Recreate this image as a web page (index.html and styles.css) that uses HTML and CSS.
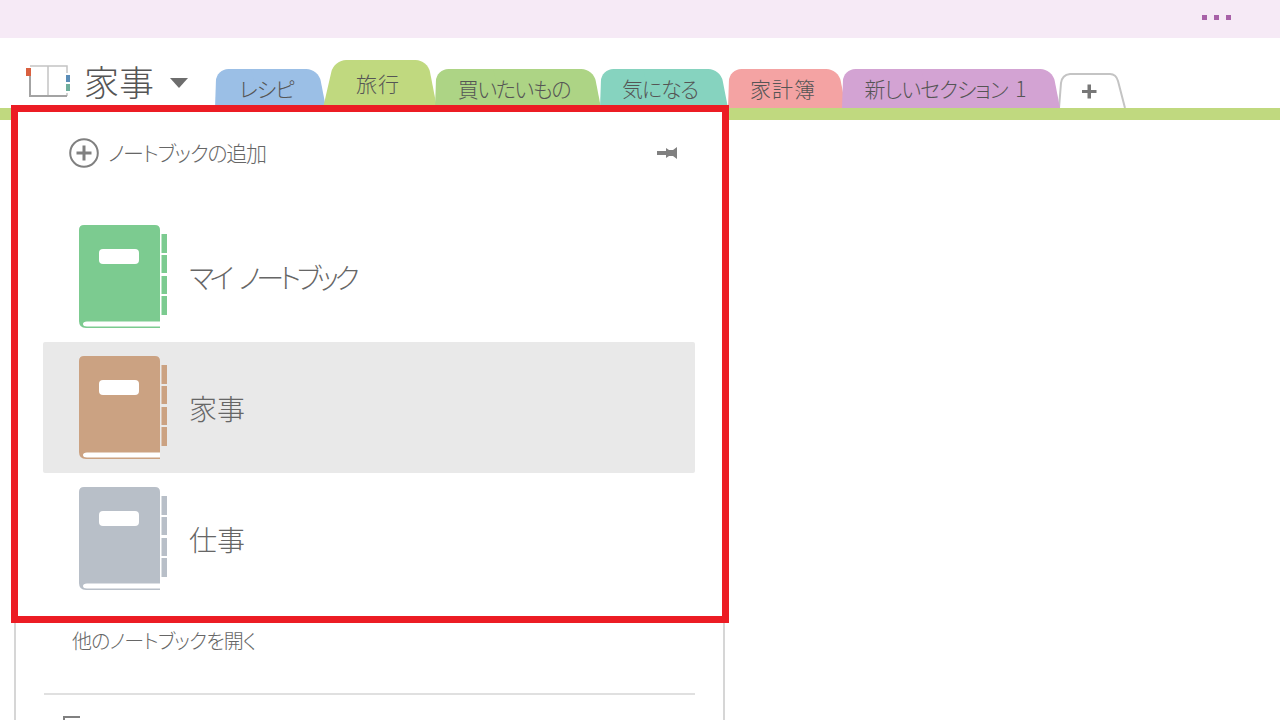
FILE: index.html
```html
<!DOCTYPE html>
<html lang="ja">
<head>
<meta charset="utf-8">
<title>家事 - OneNote</title>
<link rel="stylesheet" href="styles.css">
</head>
<body>

<svg class="defs" width="0" height="0">
  <symbol id="book" viewBox="0 0 90 104">
    <path fill="currentColor" d="M5 0H76Q81 0 81 5V103H7Q0 103 0 96V5Q0 0 5 0Z"/>
    <path fill="#fff" d="M81 96.500V101.500H8Q4 101.500 4 99Q4 96.500 8 96.500Z"/>
    <rect fill="#fff" x="20" y="24" width="40" height="15" rx="4"/>
    <rect fill="currentColor" x="82.500" y="9" width="5.500" height="19"/>
    <rect fill="currentColor" x="82.500" y="30" width="5.500" height="18"/>
    <rect fill="currentColor" x="82.500" y="51" width="5.500" height="18"/>
    <rect fill="currentColor" x="82.500" y="71" width="5.500" height="19"/>
  </symbol>
</svg>

<div id="topbar">
  <div class="dots"><i></i><i></i><i></i></div>
</div>

<div id="header">
  <svg class="nb-icon" width="45" height="34" viewBox="0 0 45 34">
    <path fill="none" stroke="#c4c4c4" stroke-width="1.500" d="M4 2H22V32M22 2H41V32"/>
    <path fill="none" stroke="#a3a3a3" stroke-width="2" d="M4 6V32H41"/>
    <rect fill="#d9603f" x="0" y="4" width="5" height="8"/>
    <rect fill="#fff" x="39" y="9" width="6" height="20"/>
    <rect fill="#5b8db8" x="40" y="11" width="4" height="7"/>
    <rect fill="#6fae9c" x="40" y="20" width="4" height="7"/>
  </svg>
  <div class="nb-title">家事</div>
  <div class="caret"></div>
  <div class="tabs">
    <div class="tab t-blue"><span>レシピ</span></div>
    <div class="tab t-active"><span>旅行</span></div>
    <div class="tab t-green"><span>買いたいもの</span></div>
    <div class="tab t-teal"><span>気になる</span></div>
    <div class="tab t-pink"><span>家計簿</span></div>
    <div class="tab t-purple"><span>新しいセクション 1</span></div>
    <div class="tab-add">
      <svg width="68" height="35" viewBox="0 0 68 35">
        <path fill="#fff" stroke="#c4c4c4" stroke-width="2" d="M1 35L3 10Q4 2 12 1H52Q58 1 60 8L67 35"/>
        <path fill="#777" d="M24 17H29.500V11.500H33V17H38.500V20H33V25.500H29.500V20H24Z"/>
      </svg>
    </div>
  </div>
</div>
<div id="accent"></div>

<div id="panel">
  <div class="add-row">
    <svg class="add-icon" width="30" height="30" viewBox="0 0 30 30">
      <circle cx="15" cy="15" r="13.800" fill="none" stroke="#808080" stroke-width="2"/>
      <path fill="#808080" d="M7.500 13.500H13.500V7.500H16.500V13.500H22.500V16.500H16.500V22.500H13.500V16.500H7.500Z"/>
    </svg>
    <span class="add-label">ノートブックの追加</span>
    <svg class="pin" width="20" height="14" viewBox="0 0 20 14">
      <path fill="#808080" d="M0 5H9V2L12 4H16L20 1V13L16 10H12L9 12V9H0Z"/>
    </svg>
  </div>

  <div class="nb-row">
    <svg class="book c-green" width="90" height="104"><use href="#book"/></svg>
    <span class="kana">マイ ノートブック</span>
  </div>
  <div class="nb-row selected">
    <svg class="book c-brown" width="90" height="104"><use href="#book"/></svg>
    <span>家事</span>
  </div>
  <div class="nb-row">
    <svg class="book c-gray" width="90" height="104"><use href="#book"/></svg>
    <span>仕事</span>
  </div>

  <div class="open-other">他のノートブックを開く</div>
  <div class="divider"></div>
  <div class="cut-icon"></div>
</div>

<div id="highlight"></div>

</body>
</html>
```

FILE: styles.css
```css
html, body {
  height: 100%;
  overflow: hidden;
}

body {
  margin: 0;
  background: #fff;
  color: #666;
  font-family: "Noto Sans CJK JP", "Noto Sans", sans-serif;
  font-weight: 300;
  font-feature-settings: "palt";
}

.defs {
  position: absolute;
}

#topbar {
  height: 38px;
  background: #f6eaf6;
  display: flex;
  justify-content: flex-end;
  align-items: center;
  padding-right: 49px;
}

.dots {
  display: flex;
  gap: 7px;
  margin-top: -3px;
}

.dots i {
  width: 5px;
  height: 5px;
  background: #a861a8;
}

#header {
  height: 70px;
  display: flex;
  padding-left: 26px;
  position: relative;
}

.nb-icon {
  margin-top: 26px;
}

.nb-title {
  font-size: 35px;
  line-height: 48px;
  margin: 19px 0 0 13px;
  width: 70px;
  white-space: nowrap;
  color: #555;
}

.caret {
  width: 0;
  height: 0;
  margin: 40px 0 0 16px;
  border-left: 9px solid transparent;
  border-right: 9px solid transparent;
  border-top: 10px solid #6d6d6d;
}

.tabs {
  display: flex;
  align-items: flex-end;
  margin-left: 27px;
  height: 70px;
}

.tab {
  position: relative;
  z-index: 0;
  height: 39px;
  box-sizing: border-box;
  padding-right: 8px;
  display: flex;
  align-items: center;
  justify-content: center;
  font-size: 21px;
  color: #555;
  white-space: nowrap;
}

.tab span {
  margin-top: -2px;
}

.tab::before,
.tab::after {
  content: "";
  position: absolute;
  z-index: -1;
  top: 0;
  bottom: 0;
  width: 60%;
  background: var(--tab);
  transform-origin: bottom;
}

.tab::before {
  left: 0;
  border-top-left-radius: 12px;
  transform: skewX(-2deg);
}

.tab::after {
  right: 0;
  border-top-right-radius: 12px;
  transform: skewX(11deg);
}

.t-blue { --tab: #9bbfe6; width: 111px; margin-right: -3px; letter-spacing: -1px; }
.t-active { --tab: #c0d97f; width: 114px; height: 48px; margin-right: -2px; padding-right: 4px; letter-spacing: 1px; }
.t-green { --tab: #add485; width: 166px; margin-right: -1px; letter-spacing: -1.400px; }
.t-teal { --tab: #86d3bf; width: 128px; letter-spacing: -1.200px; }
.t-pink { --tab: #f4a3a3; width: 118px; margin-right: -4px; letter-spacing: 1px; }
.t-purple { --tab: #d3a3d3; width: 218px; margin-right: -2px; padding-right: 12px; letter-spacing: -1px; word-spacing: 4px; }

.t-active::before {
  transform: skewX(-13deg);
}

.tab-add {
  height: 35px;
  width: 68px;
}

.tab-add svg {
  display: block;
}

#accent {
  height: 12px;
  background: #c0d97f;
}

#panel {
  position: absolute;
  top: 108px;
  left: 14px;
  width: 707px;
  height: 640px;
  background: #fff;
  border: solid #d6d6d6;
  border-width: 0 2px;
  box-sizing: content-box;
}

.add-row {
  display: flex;
  align-items: center;
  height: 90px;
  margin-bottom: 13px;
  padding: 0 46px 0 53px;
}

.add-label {
  font-size: 21px;
  letter-spacing: -1.300px;
  margin: -3px 0 0 9px;
  flex: 1;
  white-space: nowrap;
}

.nb-row {
  height: 131px;
  margin: 0 28px 0 27px;
  padding-left: 36px;
  display: flex;
  align-items: center;
  font-size: 28px;
  white-space: nowrap;
  border-radius: 2px;
}

.nb-row span {
  margin-left: 20px;
}

.nb-row .kana {
  letter-spacing: -4.400px;
  word-spacing: 7px;
}

.nb-row.selected {
  background: #e9e9e9;
}

.book {
  display: block;
}

.c-green { color: #7ccb90; }
.c-brown { color: #cba282; }
.c-gray { color: #b8bfc8; }

.open-other {
  font-size: 20px;
  letter-spacing: -0.900px;
  line-height: 26px;
  margin: 24px 0 0 56px;
}

.divider {
  height: 2px;
  background: #e0e0e0;
  margin: 39px 28px 0;
}

.cut-icon {
  width: 17px;
  height: 10px;
  margin: 21px 0 0 47px;
  border-top: 2px solid #808080;
  border-left: 2px solid #808080;
  box-sizing: border-box;
}

#highlight {
  position: absolute;
  left: 11px;
  top: 105px;
  width: 718px;
  height: 518px;
  box-sizing: border-box;
  border: 7px solid #ec1c24;
}
```
